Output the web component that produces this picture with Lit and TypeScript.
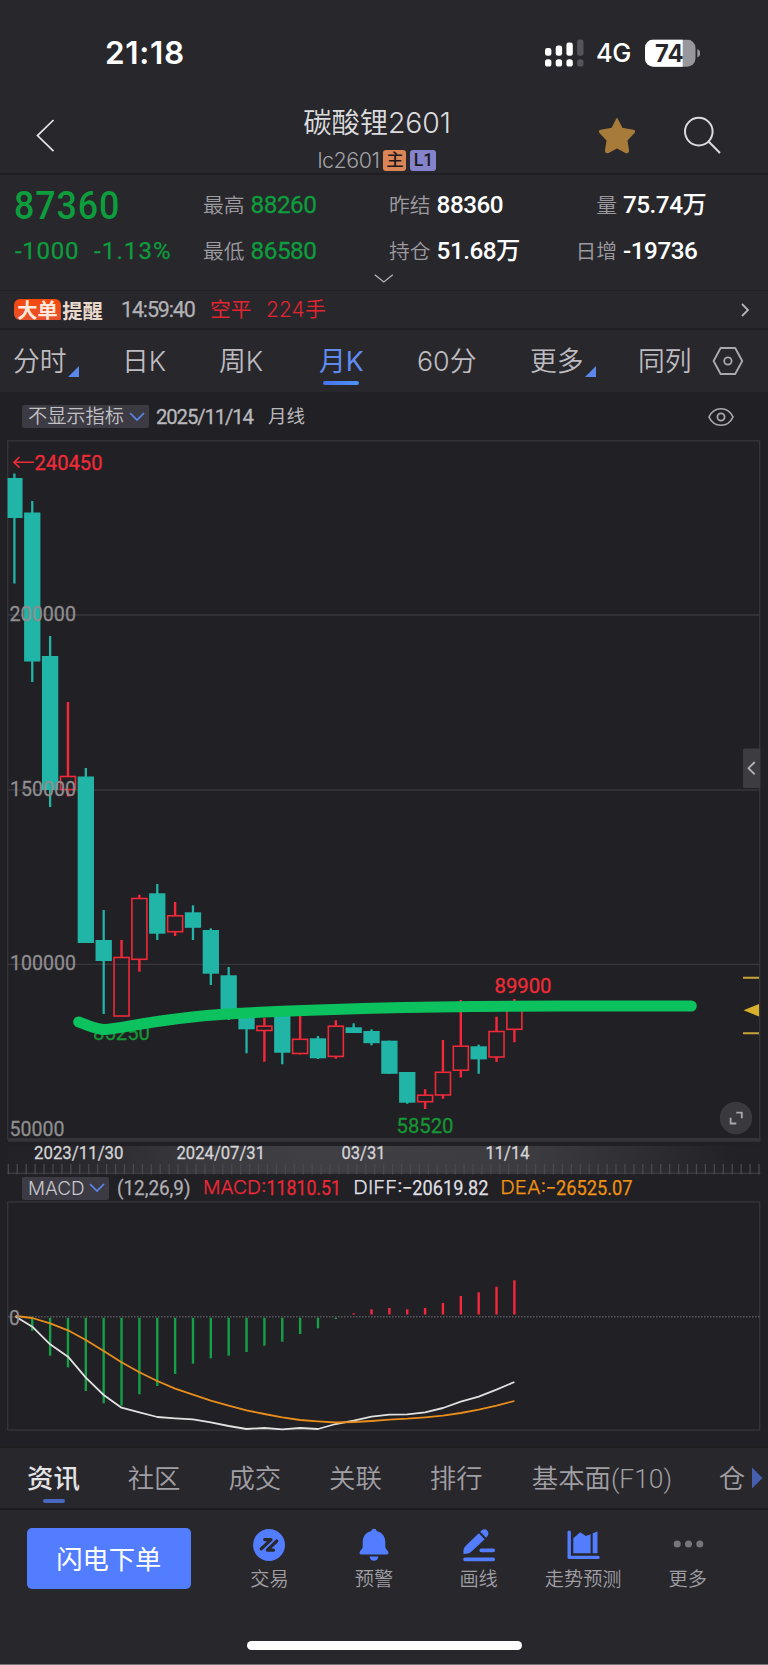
import { LitElement, html, svg, css } from "lit";
import { customElement } from "lit/decorators.js";
import { classMap } from "lit/directives/class-map.js";

type Candle = [number, number, number, number, "u" | "d"];

const STEP = 17.857;
const cx = (i: number) => 14.4 + i * STEP;

// [high, body top, body bottom, low, direction] in canvas units
const CANDLES: Candle[] = [
  [473.5, 478, 518, 583.5, "d"], [501, 512.5, 661.5, 682, "d"], [636, 656, 790, 807, "d"],
  [702, 776, 789.5, 796.5, "u"], [768, 776.5, 943, 943, "d"], [910, 940, 961, 1014, "d"],
  [940, 957, 1016, 1016, "u"], [894.7, 898, 959.3, 971.7, "u"], [884, 893.3, 933.7, 940, "d"],
  [902, 915.3, 931.7, 936, "u"], [905.3, 912.3, 927.8, 940, "d"], [928.3, 930, 973.7, 985, "d"],
  [967, 975.3, 1012, 1020, "d"], [1010, 1012, 1029.3, 1053.3, "d"], [1018, 1025.7, 1030.5, 1061.7, "u"],
  [1010, 1012, 1052.7, 1064.3, "d"], [1012, 1038.8, 1053.5, 1054.5, "u"], [1036, 1038.3, 1058.3, 1059, "d"],
  [1020.3, 1025.7, 1056.4, 1058.7, "u"], [1023.3, 1027.3, 1033, 1033, "d"], [1029.3, 1031, 1043.2, 1045.3, "d"],
  [1040.7, 1040.7, 1073.8, 1073.8, "d"], [1072, 1072, 1102.7, 1103.8, "d"], [1089.3, 1094.7, 1101.7, 1109, "u"],
  [1040, 1071.8, 1095, 1098.7, "u"], [1000, 1045.7, 1070.2, 1077.5, "u"], [1044.7, 1046.3, 1059.4, 1073.7, "d"],
  [1016.7, 1031, 1057, 1062, "u"], [999, 1005, 1029.3, 1042.3, "u"],
];

const BARS = [
  1318, 1330.7, 1355.7, 1367.3, 1391, 1403.3, 1405.7, 1394.3, 1386, 1374, 1363.7, 1358.3, 1355.7, 1352,
  1345.7, 1341.7, 1334, 1328.3, 1319, 1313.3, 1309.3, 1308, 1309.3, 1308, 1303, 1296, 1292.3, 1286.7, 1280.3,
];
const DIFF = [
  1316.5, 1326.7, 1344.3, 1356.7, 1377.7, 1395, 1407.7, 1412.3, 1417, 1418.3, 1419.3, 1422.3, 1426, 1429, 1428,
  1429.3, 1428, 1429, 1424, 1420.7, 1416.7, 1414.7, 1414.3, 1412.3, 1408, 1401.7, 1396.7, 1389.7, 1382,
];
const DEA = [
  1316, 1318, 1323.3, 1330.3, 1340, 1351, 1362.3, 1372.3, 1381, 1388.7, 1394.7, 1400.7, 1405.7, 1410.3, 1414,
  1417.3, 1420, 1421.3, 1422.5, 1422, 1421, 1419.7, 1418.7, 1417.3, 1415.7, 1413, 1409.7, 1405.7, 1401,
];

const points = (ys: number[]) => ys.map((y, i) => `${(i ? cx(i) : 15.5).toFixed(1)},${y}`).join(" ");

const label = (text: string, x: number, y: number, w: number, cls: string) =>
  svg`<text class=${cls} x=${x} y=${y} textLength=${w} lengthAdjust="spacingAndGlyphs">${text}</text>`;

const baseFont = css`
  :host {
    font-family: Roboto, "Noto Sans CJK SC", sans-serif;
  }
  svg { display: block; }
`;

@customElement("status-bar")
class StatusBar extends LitElement {
  static styles = [baseFont, css`
    :host { display: flex; height: 104px; align-items: center; justify-content: space-between; padding: 1px 68px 0 105px; box-sizing: border-box; font-family: Inter, sans-serif; color: #fff; }
    .time { font-size: 31.5px; font-weight: 600; letter-spacing: 0.7px; line-height: 40px; margin-top: 1px; }
    .right { display: flex; align-items: center; }
    .net { font-size: 25.5px; font-weight: 500; line-height: 30px; margin: 1px 0 0 12px; width: 49px; letter-spacing: -0.4px; }
    .num { font-size: 24px; font-weight: 700; fill: #28272c; }
  `];
  render() {
    const tops = [46.5, 44, 41, 38];
    return html`
      <div class="time">21:18</div>
      <div class="right">
        <svg width="39" height="28" viewBox="545 37.5 39 28">
          ${tops.map((t, i) => svg`
            <rect x=${545 + i * 10.7} y=${t} width="6.4" height=${54.3 - t} rx="2.4" fill=${i < 3 ? "#fff" : "#55545a"}></rect>
            <rect x=${545 + i * 10.7} y="57.7" width="6.4" height="7.4" rx="2.6" fill=${i < 3 ? "#fff" : "#55545a"}></rect>`)}
        </svg>
        <div class="net">4G</div>
        <svg width="55" height="28" viewBox="645 37.5 55 28">
          <defs><clipPath id="b"><rect x="645" y="38" width="50.5" height="27.3" rx="8.5"></rect></clipPath></defs>
          <g clip-path="url(#b)">
            <rect x="645" y="38" width="51" height="28" fill="#98979b"></rect>
            <rect x="645" y="38" width="37.7" height="28" fill="#fff"></rect>
          </g>
          <path d="M697.3 47.5q3 1.2 3 4.3t-3 4.3z" fill="#98979b"></path>
          <text class="num" x="655" y="60.4" textLength="28.5" lengthAdjust="spacingAndGlyphs">74</text>
        </svg>
      </div>`;
  }
}

@customElement("title-bar")
class TitleBar extends LitElement {
  static styles = [baseFont, css`
    :host { display: grid; grid-template-columns: 150px 1fr 150px; height: 69px; border-bottom: 2px solid #1f1e22; color: #dcdcde; align-items: start; }
    .back { margin: 15px 0 0 36px; }
    .mid { display: flex; flex-direction: column; align-items: center; padding-right: 14px; }
    .name { font: 350 28.4px/36px Inter, "Noto Sans CJK SC", sans-serif; letter-spacing: -0.1px; white-space: nowrap; margin-top: 1px; }
    .sub { display: flex; align-items: center; height: 24px; margin-top: 7px; gap: 4px; }
    .code { font-family: Inter, sans-serif; font-weight: 300; font-size: 21.5px; color: #a3a2a7; letter-spacing: -0.5px; }
    .tag { height: 21px; border-radius: 3px; color: #1c1a1c; font: 500 17.5px/21px Roboto, "Noto Sans CJK SC", sans-serif; text-align: center; width: 23px; background: #dc8658; }
    .lv { width: 26px; background: #8583cb; }
    .acts { display: flex; align-items: center; gap: 47px; padding: 12px 0 0 0; margin-left: -20px; }
  `];
  render() {
    return html`
      <svg class="back" width="20" height="34" viewBox="36 119 20 34"><path d="M53.5 120L37.5 135.6L53.5 151.2" fill="none" stroke="#e6e6e8" stroke-width="1.7"></path></svg>
      <div class="mid">
        <div class="name">碳酸锂2601</div>
        <div class="sub"><span class="code">lc2601</span><span class="tag">主</span><span class="tag lv">L1</span></div>
      </div>
      <div class="acts">
        <svg width="38" height="38" viewBox="0 0 38 38"><path d="M19 2.8L24 12.6L35.3 14.4Q37 15 36 16.5L28.7 24.3L30.3 34.7Q30.2 37 28.2 36.5L19 31.7L9.8 36.5Q7.8 37 7.7 34.7L9.3 24.3L2 16.5Q1 15 2.7 14.4L14 12.6Z" fill="#a77b3a" stroke="#a77b3a" stroke-width="1.5" stroke-linejoin="round"></path></svg>
        <svg width="40" height="38" viewBox="683 116 40 38"><circle cx="698.8" cy="131.6" r="13.8" fill="none" stroke="#dcdcde" stroke-width="2"></circle><path d="M708.3 141.3L720 153" stroke="#dcdcde" stroke-width="2"></path></svg>
      </div>`;
  }
}

@customElement("quote-panel")
class QuotePanel extends LitElement {
  static styles = [baseFont, css`
    :host { display: flex; flex-direction: column; height: 115px; border-bottom: 1px solid #222125; }
    .grid { display: grid; grid-template-columns: 188px 186px 179px 1fr; grid-template-rows: 60px 32px; padding-left: 15px; height: 92px; align-items: center; }
    .price { font-weight: 500; font-size: 39.5px; letter-spacing: 1px; color: #0d9d3c; line-height: 44px; margin: 1px 0 0 -1px; transform: scaleX(0.905); transform-origin: left; }
    .chg { display: flex; gap: 15px; font-size: 24px; color: #0d9d3c; letter-spacing: 0.7px; white-space: nowrap; font-weight: 400; -webkit-text-stroke: 0.25px #0d9d3c; }
    .pct { letter-spacing: 1.1px; }
    .cell { display: flex; align-items: baseline; gap: 6px; line-height: 31px; white-space: nowrap; }
    .k { font-weight: 350; font-size: 20.8px; color: #9c9ba0; }
    .v { font-weight: 500; font-size: 24.3px; letter-spacing: -0.5px; color: #fff; }
    .g { color: #0d9d3c; font-weight: 400; -webkit-text-stroke: 0.3px #0d9d3c; }
    .r .k { width: 49px; text-align: right; }
    .arrow { margin: 6px auto 0 374px; }
  `];
  cell(k: string, v: string, g = false, r = false) {
    return html`<div class=${classMap({ cell: true, r })}><span class="k">${k}</span><span class=${classMap({ v: true, g })}>${v}</span></div>`;
  }
  render() {
    return html`
      <div class="grid">
        <div class="price">87360</div>
        ${this.cell("最高", "88260", true)}${this.cell("昨结", "88360")}${this.cell("量", "75.74万", false, true)}
        <div class="chg"><span>-1000</span><span class="pct">-1.13%</span></div>
        ${this.cell("最低", "86580", true)}${this.cell("持仓", "51.68万")}${this.cell("日增", "-19736", false, true)}
      </div>
      <svg class="arrow" width="20" height="12" viewBox="0 0 20 12"><path d="M0.8 1.8L9.8 9L18.8 1.8" fill="none" stroke="#b4b3b7" stroke-width="1.3"></path></svg>`;
  }
}

@customElement("order-alert")
class OrderAlert extends LitElement {
  static styles = [baseFont, css`
    :host { display: flex; height: 37px; border-bottom: 2px solid #1f1e22; align-items: center; padding: 0 18px 0 14px; }
    .big { width: 47px; height: 21px; border-radius: 6px 6px 1px 6px; background: linear-gradient(#f5480c, #e8512f); color: #ffe9dc; }
    .warn { color: #e9d9cc; width: 43px; }
    .brand { font: oblique 6deg 700 20.3px/20px "Noto Sans CJK SC", sans-serif; white-space: nowrap; text-align: center; }
    .time { margin-left: 17px; font-size: 21.5px; color: #b2b1b5; letter-spacing: -1.15px; width: 89px; -webkit-text-stroke: 0.25px #b2b1b5; }
    .act { font-size: 20.8px; font-weight: 400; color: #e22531; width: 56px; line-height: 30px; }
    .n { flex: 1; font-weight: 350; font-family: Inter, "Noto Sans CJK SC", sans-serif; letter-spacing: 0.2px; }
  `];
  render() {
    return html`
      <span class="brand big">大单</span><span class="brand warn">提醒</span>
      <span class="time">14:59:40</span><span class="act">空平</span><span class="act n">224手</span>
      <svg width="10" height="14" viewBox="0 0 10 14"><path d="M2 1L8 7L2 13" fill="none" stroke="#b4b3b7" stroke-width="1.8"></path></svg>`;
  }
}

@customElement("period-tabs")
class PeriodTabs extends LitElement {
  static styles = [baseFont, css`
    :host { display: grid; grid-template-columns: 109px 97px 100px 98px 113px 108px 74px 1fr; height: 62px; padding-left: 13px; align-items: center; }
    .tab { display: flex; align-items: center; height: 62px; font: 350 26.8px/62px Inter, "Noto Sans CJK SC", sans-serif; color: #bdbcc0; white-space: nowrap; position: relative; }
    .on { color: #5f8bef; font-weight: 400; }
    .line { position: absolute; left: 4px; top: 51px; width: 36px; height: 4px; border-radius: 2px; background: linear-gradient(90deg, #4a72ee, #4b93f5); }
    .tri { margin: 20px 0 0 1px; }
  `];
  render() {
    const tri = html`<svg class="tri" width="11" height="11"><path d="M11 0V11H0Z" fill="#5b86ea"></path></svg>`;
    return html`
      <span class="tab">分时${tri}</span><span class="tab">日K</span><span class="tab">周K</span>
      <span class="tab on">月K<i class="line"></i></span><span class="tab">60分</span>
      <span class="tab">更多${tri}</span><span class="tab">同列</span>
      <svg width="32" height="30" viewBox="0 0 32 30"><path d="M8.6 2H23.2L30.2 15L23.2 28H8.6L1.6 15Z" fill="none" stroke="#a9a8ac" stroke-width="1.9" stroke-linejoin="round"></path><circle cx="15.9" cy="15" r="3.7" fill="none" stroke="#a9a8ac" stroke-width="1.8"></circle></svg>`;
  }
}

@customElement("kline-chart")
class KlineChart extends LitElement {
  static styles = [baseFont, css`
    :host { display: block; background: #212024; }
    .bar { display: flex; align-items: center; height: 48px; padding: 1px 33px 0 22px; box-sizing: border-box; color: #b9b8bc; }
    .chip { display: flex; align-items: center; justify-content: space-between; width: 127px; height: 23px; box-sizing: border-box; padding: 0 4px 0 6px; background: #3c3b43; border-radius: 2px; font: 350 19.2px/23px Roboto, "Noto Sans CJK SC", sans-serif; white-space: nowrap; color: #c2c1c5; }
    .date { margin-left: 7px; font-size: 20.3px; width: 112px; letter-spacing: -1.1px; -webkit-text-stroke: 0.3px #b9b8bc; }
    .kind { flex: 1; font-size: 18.5px; line-height: 24px; font-weight: 400; }
    text { font-size: 21px; stroke-width: 0.3px; }
    .axis { fill: #8f8e90; stroke: #8f8e90; }
    .red { fill: #f02b38; stroke: #f02b38; }
    .green { fill: #169634; stroke: #169634; }
    .tick { fill: #d4d4d6; stroke: #d4d4d6; font-size: 19px; }
  `];
  render() {
    const ticks = Array.from({ length: 85 }, (_, i) => 8.3 + i * 8.937);
    return html`
      <div class="bar">
        <span class="chip">不显示指标<svg width="16" height="12" viewBox="0 0 16 12"><path d="M1 2L8 9L15 2" fill="none" stroke="#5b86ea" stroke-width="1.7"></path></svg></span>
        <span class="date">2025/11/14</span><span class="kind">月线</span>
        <svg width="28" height="20" viewBox="0 0 28 20"><path d="M2 10C7-1 21-1 26 10C21 21 7 21 2 10Z" fill="none" stroke="#a9a8ac" stroke-width="1.7"></path><circle cx="14" cy="10" r="3.6" fill="none" stroke="#a9a8ac" stroke-width="1.8"></circle></svg>
      </div>
      <svg width="768" height="735" viewBox="0 440 768 735">
        <defs><linearGradient id="axis"><stop offset="0.03" stop-color="#232226"></stop><stop offset="0.25" stop-color="#39383d"></stop><stop offset="0.4" stop-color="#403f44"></stop><stop offset="0.7" stop-color="#3c3b40"></stop><stop offset="0.97" stop-color="#222125"></stop></linearGradient></defs>
        <rect x="7.7" y="440.8" width="752" height="698" fill="none" stroke="#353439" stroke-width="1.4"></rect>
        ${[615, 790, 964.4].map((y) => svg`<path d="M8 ${y}H760" stroke="#38373b" stroke-width="1.4"></path>`)}
        <rect x="8" y="1138.2" width="752.5" height="3.6" fill="#353439"></rect>
        ${CANDLES.map(([h, t, b, l, dir], i) => {
          const x = cx(i);
          const left = i ? x - 8.15 : 7.6;
          return dir === "d"
            ? svg`<path d="M${x} ${h}V${l}" stroke="#21b5a8" stroke-width="2.3"></path><rect x=${left} y=${t} width=${x + 8.15 - left} height=${b - t} fill="#21b5a8"></rect>`
            : svg`<path d="M${x} ${h}V${t}M${x} ${b}V${l}" stroke="#f6273a" stroke-width="2.4"></path><rect x=${x - 7.5} y=${t + 0.5} width="15" height=${b - t - 0.5} fill="none" stroke="#ee2938" stroke-width="1.6"></rect>`;
        })}
        ${label("200000", 9.5, 621, 66.5, "axis")}${label("150000", 10, 795.8, 66, "axis")}
        ${label("100000", 10, 970.2, 66, "axis")}${label("50000", 9.5, 1136.4, 55, "axis")}
        <path d="M34 462.3H14M19.5 457L14 462.3L19.5 467.6" fill="none" stroke="#f02b38" stroke-width="1.6"></path>
        ${label("240450", 34.5, 469.8, 68, "red")}${label("89900", 494.5, 993.2, 57, "red")}
        ${label("85250", 93, 1039.6, 57, "green")}${label("58520", 396.5, 1132.6, 57, "green")}
        <path d="M78.7 1022C88 1025 97 1030 106 1029.5C128 1027.5 158 1018.5 227 1014C330 1008 430 1006.2 560 1006H691.3" fill="none" stroke="#0bc25f" stroke-width="11" stroke-linecap="round" stroke-linejoin="round"></path>
        <path d="M743 977.7H759M743 1033.2H759" stroke="#c9a436" stroke-width="2"></path>
        <path d="M743.5 1010.2L759 1004V1016.6Z" fill="#d8b02c"></path>
        <rect x="743" y="748.6" width="17.3" height="39.4" rx="1.5" fill="#3d3c40"></rect>
        <path d="M754.7 762L748.5 768.2L754.7 774.4" fill="none" stroke="#b4b3b6" stroke-width="1.8"></path>
        <circle cx="736" cy="1118" r="16.2" fill="#3a393d"></circle>
        <path d="M736.3 1112.7H741.8V1118.3M730.6 1117.8V1123.5H736.3" fill="none" stroke="#a9a8ac" stroke-width="1.8"></path>
        <rect x="8" y="1146" width="752" height="28" fill="url(#axis)"></rect>
        <path d="M7.5 1173.2H760.5" stroke="#3a393e" stroke-width="1.6"></path>
        ${ticks.map((x) => svg`<path d="M${x} 1164V1174.5" stroke="#4a494e" stroke-width="1.3"></path>`)}
        ${label("2023/11/30", 34, 1159, 89.5, "tick")}${label("2024/07/31", 176.5, 1159, 88.5, "tick")}
        ${label("03/31", 341.5, 1159, 44, "tick")}${label("11/14", 485.5, 1159, 44, "tick")}
      </svg>`;
  }
}

@customElement("macd-chart")
class MacdChart extends LitElement {
  static styles = [baseFont, css`
    :host { display: block; background: #212024; height: 271px; border-bottom: 2px solid #1e1d20; }
    .bar { display: flex; align-items: center; height: 26px; padding: 0 0 0 22px; font-size: 20px; white-space: nowrap; }
    .chip { display: flex; align-items: center; justify-content: space-between; width: 87px; height: 23px; box-sizing: border-box; padding: 0 4px 0 6px; background: #3c3b43; border-radius: 2px; font: 300 18.9px/23px Inter, sans-serif; color: #c8c7cb; }
    text { font-size: 20px; stroke-width: 0.25px; }
    .nm { font-family: Inter, sans-serif; font-size: 18.6px; font-weight: 350; stroke: none; }
    .gray { fill: #b0afb3; stroke: #b0afb3; }
    .red { fill: #ee2836; stroke: #ee2836; }
    .white { fill: #dfdfe1; stroke: #dfdfe1; }
    .orange { fill: #ee9113; stroke: #ee9113; }
    .axis { fill: #8f8e90; stroke: #8f8e90; font-size: 21px; }
  `];
  render() {
    return html`
      <div class="bar">
        <span class="chip">MACD<svg width="16" height="12" viewBox="0 0 16 12"><path d="M1 2L8 9L15 2" fill="none" stroke="#5b86ea" stroke-width="1.7"></path></svg></span>
        <svg width="659" height="26" viewBox="109 1175 659 26">
          ${label("(12,26,9)", 117, 1194.6, 73.5, "gray")}
          ${label("MACD:", 203, 1194.2, 63.5, "red nm")}${label("11810.51", 266.5, 1194.6, 74.5, "red")}
          ${label("DIFF:", 353.3, 1194.2, 49.5, "white nm")}${label("−20619.82", 402, 1194.6, 86.5, "white")}
          ${label("DEA:", 500.3, 1194.2, 46, "orange nm")}${label("−26525.07", 545.5, 1194.6, 87, "orange")}
        </svg>
      </div>
      <svg width="768" height="244" viewBox="0 1201 768 244">
        <rect x="7.7" y="1201.9" width="752" height="228.2" fill="none" stroke="#353439" stroke-width="1.4"></rect>
        <path d="M8 1316.8H760" stroke="#55545a" stroke-width="1.5" stroke-dasharray="1.6 1.4"></path>
        ${BARS.map((y, i) => i === 0 ? null : svg`<path d="M${cx(i)} ${i < 19 ? 1317.8 : 1314.5}V${y}" stroke=${i < 19 ? "#14a047" : "#f6273a"} stroke-width="2.4"></path>`)}
        <polyline points=${points(DIFF)} fill="none" stroke="#e2e1e2" stroke-width="1.8" stroke-linejoin="round"></polyline>
        <polyline points=${points(DEA)} fill="none" stroke="#e98e1c" stroke-width="1.8" stroke-linejoin="round"></polyline>
        ${label("0", 9, 1324.6, 11, "axis")}
      </svg>`;
  }
}

@customElement("info-tabs")
class InfoTabs extends LitElement {
  static styles = [baseFont, css`
    :host { display: grid; grid-template-columns: repeat(4, 100.7px) 102px 187px 32px 1fr; height: 60px; padding-left: 27px; border-bottom: 2px solid #1c1b1f; align-items: center; box-sizing: content-box; }
    .tab { font: 350 26.4px/63px Roboto, "Noto Sans CJK SC", sans-serif; color: #a09fa4; white-space: nowrap; position: relative; height: 60px; }
    .on { color: #e4e4e6; font-weight: 500; }
    .line { position: absolute; left: 16px; top: 51px; width: 21.5px; height: 4px; border-radius: 2px; background: #4a67c0; }
  `];
  render() {
    return html`
      <span class="tab on">资讯<i class="line"></i></span>
      ${["社区", "成交", "关联", "排行", "基本面(F10)", "仓"].map((t) => html`<span class="tab">${t}</span>`)}
      <svg width="12" height="22"><path d="M1 0.5L11.5 11L1 21.5Z" fill="#465fae"></path></svg>`;
  }
}

@customElement("action-bar")
class ActionBar extends LitElement {
  static styles = [baseFont, css`
    :host { display: flex; flex-direction: column; height: 154px; border-bottom: 1px solid #747378; }
    .row { display: flex; padding: 18px 28px 0 27px; height: 131px; box-sizing: border-box; }
    .buy { width: 164px; height: 61px; border-radius: 5px; background: #527dff; color: #fff; font: 400 26.3px/60px "Noto Sans CJK SC", sans-serif; text-align: center; margin-right: 26.5px; }
    .item { width: 104.8px; display: flex; flex-direction: column; align-items: center; font: 350 19.2px/26px "Noto Sans CJK SC", sans-serif; color: #a09fa4; }
    .item svg { margin-bottom: 3px; }
    .home { width: 275px; height: 9px; border-radius: 5px; background: #fff; margin: 0 auto; }
  `];
  render() {
    const blue = "#527dff";
    const items = [
      ["交易", svg`<circle cx="17" cy="17" r="16" fill=${blue}></circle><path d="M12.7 11.6H19L9.2 20.8M24.8 13L15.3 22.2H21.5" fill="none" stroke="#28272c" stroke-width="3.2" stroke-linecap="round" stroke-linejoin="round"></path>`],
      ["预警", svg`<path d="M17 0.7C18.6 0.7 19.3 1.6 19.6 3C25.5 4.3 28.3 9 28.3 14V18.5C28.3 20.5 29.5 21.5 30.6 22.8C32.2 24.8 31.5 26.6 29.2 26.6H4.8C2.5 26.6 1.8 24.8 3.4 22.8C4.5 21.5 5.7 20.5 5.7 18.5V14C5.7 9 8.5 4.3 14.4 3C14.7 1.6 15.4 0.7 17 0.7ZM12.6 28.6H21.4C21 31.5 19.4 32.8 17 32.8S13 31.5 12.6 28.6Z" fill=${blue}></path>`],
      ["画线", svg`<path d="M16.8 5.2L22.7 11.2L9.5 23.5C7.5 25.3 5 26 1.4 26C1.2 22 1.8 19.8 4 17.5ZM18.2 3.8C20.7 0.8 23.4 0.6 25.2 2.4C27.2 4.5 26.9 7 24.1 9.8Z" fill=${blue}></path><path d="M19.2 22.3H31.2M3 31.3H31.2" stroke=${blue} stroke-width="3.7" stroke-linecap="round"></path>`],
      ["走势预测", svg`<path d="M3.2 4.3V29.4H32" fill="none" stroke=${blue} stroke-width="3.4" stroke-linecap="round" stroke-linejoin="round"></path><path d="M7.3 10.3L14.2 4.3L19.8 8L24.6 6.2V25.3H7.3ZM26.7 5.2L31.5 3.4V25.3H26.7Z" fill=${blue}></path>`],
      ["更多", svg`<circle cx="6.2" cy="16" r="3.5" fill="#77767a"></circle><circle cx="17.5" cy="16" r="3.5" fill="#77767a"></circle><circle cx="28.8" cy="16" r="3.5" fill="#77767a"></circle>`],
    ];
    return html`
      <div class="row">
        <div class="buy">闪电下单</div>
        ${items.map(([t, i]) => html`<div class="item"><svg width="34" height="34" viewBox="0 0 34 34">${i}</svg>${t}</div>`)}
      </div>
      <div class="home"></div>`;
  }
}

@customElement("app-root")
class AppRoot extends LitElement {
  static styles = css`
    :host { display: flex; flex-direction: column; width: 768px; height: 1665px; background: #28272c; overflow: hidden; }
    .page { display: flex; flex-direction: column; }
  `;
  render() {
    return html`<div class="page">
      <status-bar></status-bar><title-bar></title-bar><quote-panel></quote-panel><order-alert></order-alert>
      <period-tabs></period-tabs><kline-chart></kline-chart><macd-chart></macd-chart>
      <info-tabs></info-tabs><action-bar></action-bar>
    </div>`;
  }
}
